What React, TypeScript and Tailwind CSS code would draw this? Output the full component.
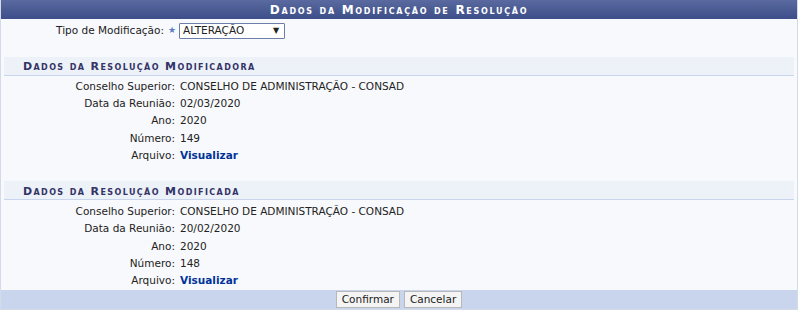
import React from 'react';

const font = { fontFamily: '"DejaVu Sans", Verdana, sans-serif' };

type Row = { label: string; value: string; link?: boolean };

const modificadora: Row[] = [
  { label: 'Conselho Superior:', value: 'CONSELHO DE ADMINISTRAÇÃO - CONSAD' },
  { label: 'Data da Reunião:', value: '02/03/2020' },
  { label: 'Ano:', value: '2020' },
  { label: 'Número:', value: '149' },
  { label: 'Arquivo:', value: 'Visualizar', link: true },
];

const modificada: Row[] = [
  { label: 'Conselho Superior:', value: 'CONSELHO DE ADMINISTRAÇÃO - CONSAD' },
  { label: 'Data da Reunião:', value: '20/02/2020' },
  { label: 'Ano:', value: '2020' },
  { label: 'Número:', value: '148' },
  { label: 'Arquivo:', value: 'Visualizar', link: true },
];

const SectionTitle = ({ children }: { children: React.ReactNode }) => (
  <div className="mx-[3px] h-[19px] flex items-center pl-[19px] pt-[3px] bg-[#edf1f8] border-b border-[#c8d5ec] text-[11px] font-bold text-[#333366] tracking-[1.4px] [font-variant:small-caps]">
    {children}
  </div>
);

const Rows = ({ rows, top }: { rows: Row[]; top: string }) => (
  <div className={`flex flex-col ${top}`}>
    {rows.map((r) => (
      <div key={r.label} className="grid grid-cols-[174px_1fr] gap-[5px] h-[17.25px] items-center text-[10.5px] text-[#222]">
        <span className="text-right">{r.label}</span>
        <span className={r.link ? 'font-bold text-[#003399]' : ''}>{r.value}</span>
      </div>
    ))}
  </div>
);

export default function App() {
  return (
    <div className="w-[799px] h-[312px] bg-white" style={font}>
      <div className="w-[798px] border border-[#d4dbe8] border-t-0 bg-[#f8f9fc]">
        <div className="h-[19px] flex items-center justify-center bg-gradient-to-b from-[#5a6aa0] to-[#3d4e89] text-white text-[12px] font-bold tracking-[1.7px] [font-variant:small-caps]">
          Dados da Modificação de Resolução
        </div>

        <div className="grid grid-cols-[163px_1fr] h-[22px] items-center text-[10.5px] text-[#222] mt-[1px]">
          <span className="text-right">Tipo de Modificação:</span>
          <div className="flex items-center">
            <span className="text-[#5b7fc0] text-[9px] ml-[4px] mr-[3px]">★</span>
            <div className="w-[106px] h-[16px] border border-[#6b7fa8] bg-white flex items-center justify-between pl-[3px] pr-[5px] rounded-[1px]">
              <span>ALTERAÇÃO</span>
              <span className="text-[8px]">▼</span>
            </div>
          </div>
        </div>

        <div className="h-[15px]" />

        <SectionTitle>Dados da Resolução Modificadora</SectionTitle>
        <Rows rows={modificadora} top="pt-[2px]" />

        <div className="h-[17px]" />

        <SectionTitle>Dados da Resolução Modificada</SectionTitle>
        <Rows rows={modificada} top="pt-[3px]" />

        <div className="h-[19px] bg-[#c8d5ec] flex items-center justify-center gap-[4px]">
          <button className="h-[17px] px-[5px] text-[10.5px] text-[#222] bg-[#f4f4f4] border border-[#b8b8b8] leading-none">
            Confirmar
          </button>
          <button className="h-[17px] px-[5px] text-[10.5px] text-[#222] bg-[#f4f4f4] border border-[#b8b8b8] leading-none">
            Cancelar
          </button>
        </div>
      </div>
    </div>
  );
}
